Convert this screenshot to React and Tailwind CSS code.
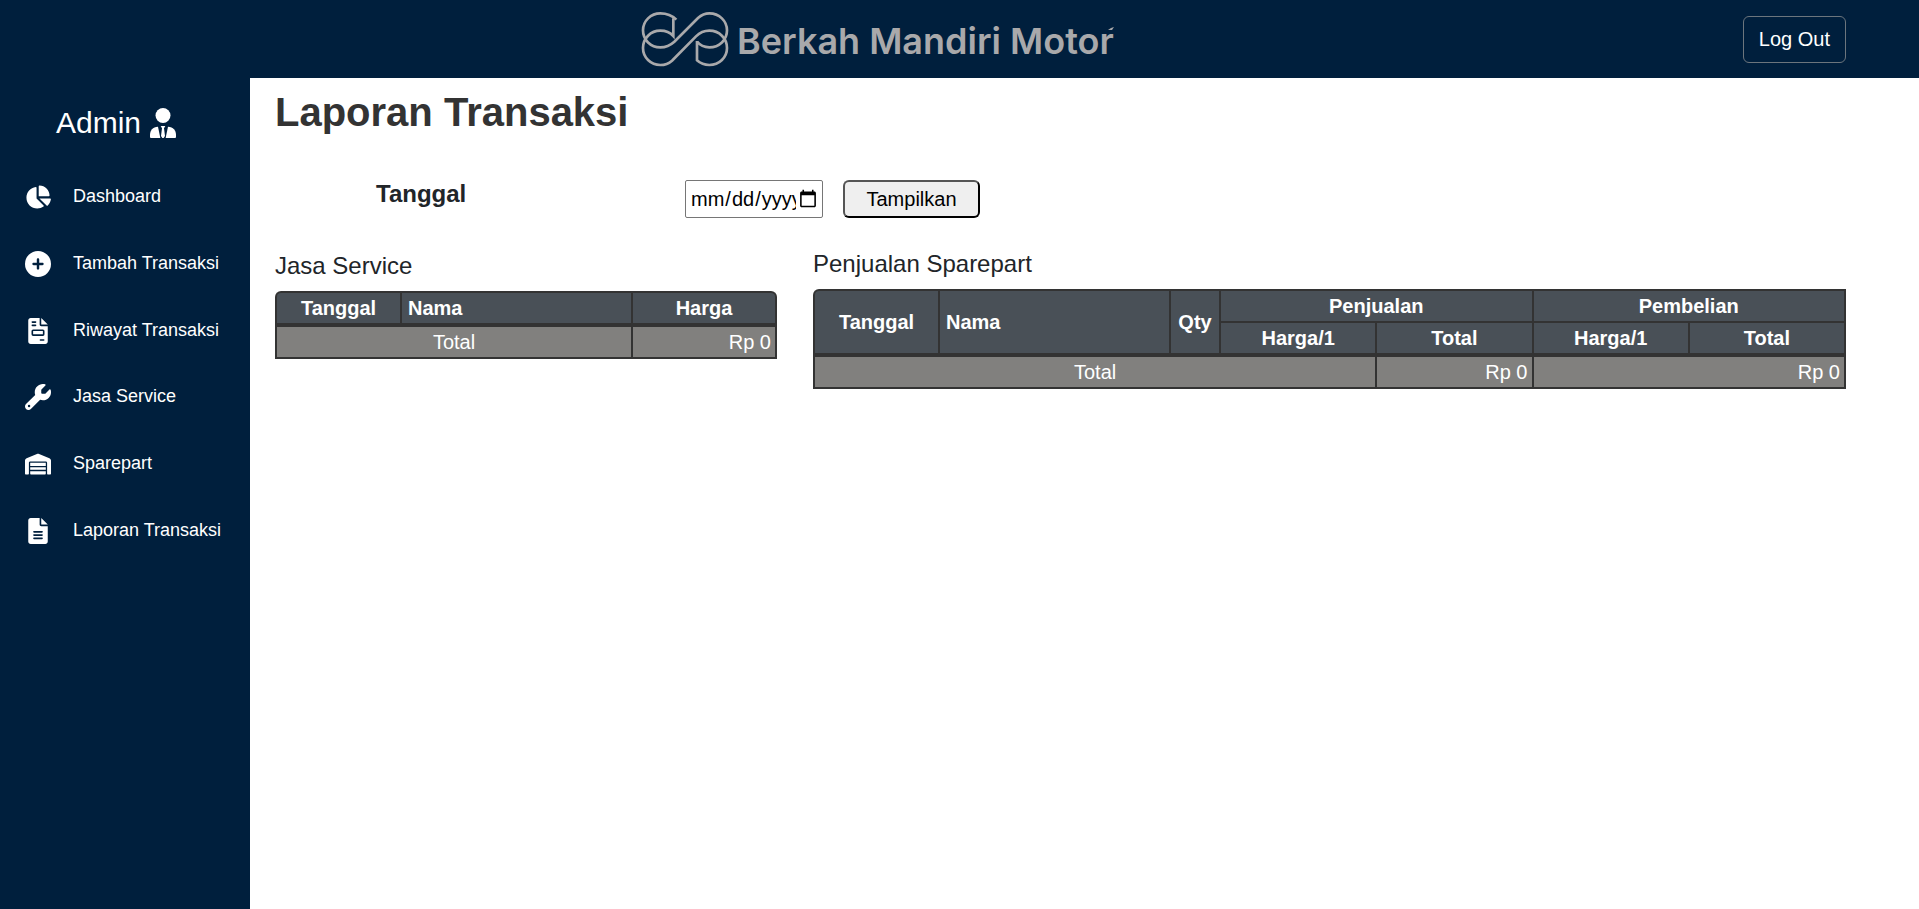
import { FaChartPie, FaCirclePlus, FaWarehouse, FaWrench } from "react-icons/fa6";

const filePage =
  "M256 0v128h128L256 0z M224 128V0H48C21.5 0 0 21.5 0 48v416c0 26.5 21.5 48 48 48h288c26.5 0 48-21.5 48-48V160H256c-17.7 0-32-14.3-32-32z";

function InvoiceIcon({ className }) {
  return (
    <svg viewBox="0 0 384 512" className={className} aria-hidden="true">
      <path d={filePage} fill="currentColor" />
      <g fill="none" stroke="#001f3d" strokeWidth="32" strokeLinecap="round">
        <path d="M80 80h64 M80 144h64 M240 432h64" />
        <rect x="80" y="240" width="224" height="96" rx="16" />
      </g>
    </svg>
  );
}

function ReportIcon({ className }) {
  return (
    <svg viewBox="0 0 384 512" className={className} aria-hidden="true">
      <path d={filePage} fill="currentColor" />
      <path d="M112 272h160 M112 336h160 M112 400h160" fill="none" stroke="#001f3d" strokeWidth="32" strokeLinecap="round" />
    </svg>
  );
}

const menu = [
  { label: "Dashboard", Icon: FaChartPie },
  { label: "Tambah Transaksi", Icon: FaCirclePlus },
  { label: "Riwayat Transaksi", Icon: InvoiceIcon },
  { label: "Jasa Service", Icon: FaWrench },
  { label: "Sparepart", Icon: FaWarehouse },
  { label: "Laporan Transaksi", Icon: ReportIcon },
];

function Logo() {
  return (
    <div className="flex items-center gap-2 text-[#a9a9ab]">
      <svg viewBox="40 34 264 168" className="h-14 w-[88px]" fill="none" stroke="currentColor" strokeWidth="8" aria-hidden="true">
        <path d="M146 60 C134 48 118 41 98 41 C69 41 46 64 46 92 C46 121 69 143 98 143 C115 143 128 137 140 126 L211 55 C221 46 231 41 245 41 C275 41 298 64 298 92 C298 121 275 143 245 143 C231 143 218 138 208 126" />
        <path d="M137 56 V109 C127 98 114 93 98 93 C69 93 46 116 46 145 C46 173 69 196 98 196 C112 196 123 192 133 183 L205 110 C216 99 229 93 245 93 C275 93 298 116 298 145 C298 173 275 196 245 196 C231 196 218 191 208 182 V124" />
      </svg>
      <span className="relative pt-1 font-[Inter,sans-serif] text-4xl leading-10 font-semibold">
        Berkah Mandiri Motor
        <svg viewBox="0 0 6 4" className="absolute top-2.5 right-0 h-1 w-1.5" fill="currentColor" aria-hidden="true">
          <path d="M0 3 L3 1 L6 0 L4 3 Z" />
        </svg>
      </span>
    </div>
  );
}

function AdminIcon() {
  return (
    <svg viewBox="0 0 78 90" className="h-[30px] w-[26px]" fill="currentColor" aria-hidden="true">
      <circle cx="39" cy="22.5" r="22.5" />
      <path d="M0 87 V81 C0 67 8 57 24 56 L31 90 H3 Q0 90 0 87 Z" />
      <path d="M78 87 V81 C78 67 70 57 54 56 L47 90 H75 Q78 90 78 87 Z" />
      <path d="M32 54 H46 L42 61 L45 84 L41 90 H37 L33 84 L36 61 Z" />
    </svg>
  );
}

const tableClass =
  "w-full table-fixed border-separate border-spacing-[2px] bg-[#333333] text-xl leading-[30px] text-white";
const th = "bg-[#495057] p-0 text-center font-bold";
const thLeft = "bg-[#495057] py-0 px-1.5 text-left font-bold";
const tdCenter = "border-t-2 border-[#333333] bg-[#81807e] p-0 text-center";
const tdRight = "border-t-2 border-[#333333] bg-[#81807e] py-0 px-1 text-right";

function ServiceTable() {
  return (
    <table className={`${tableClass} rounded-t-md`} aria-labelledby="jasa-service">
      <colgroup>
        <col className="w-[123px]" />
        <col />
        <col className="w-[142px]" />
      </colgroup>
      <thead>
        <tr>
          <th className={`${th} rounded-tl-sm`}>Tanggal</th>
          <th className={thLeft}>Nama</th>
          <th className={`${th} rounded-tr-sm`}>Harga</th>
        </tr>
      </thead>
      <tbody>
        <tr>
          <td colSpan={2} className={tdCenter}>Total</td>
          <td className={tdRight}>Rp 0</td>
        </tr>
      </tbody>
    </table>
  );
}

function SparepartTable() {
  return (
    <table className={`${tableClass} rounded-tl-md`} aria-labelledby="penjualan-sparepart">
      <colgroup>
        <col className="w-[123px]" />
        <col className="w-[229px]" />
        <col className="w-12" />
        <col />
        <col />
        <col />
        <col />
      </colgroup>
      <thead>
        <tr>
          <th rowSpan={2} className={`${th} rounded-tl-sm`}>Tanggal</th>
          <th rowSpan={2} className={thLeft}>Nama</th>
          <th rowSpan={2} className={th}>Qty</th>
          <th colSpan={2} className={th}>Penjualan</th>
          <th colSpan={2} className={th}>Pembelian</th>
        </tr>
        <tr>
          <th className={th}>Harga/1</th>
          <th className={th}>Total</th>
          <th className={th}>Harga/1</th>
          <th className={th}>Total</th>
        </tr>
      </thead>
      <tbody>
        <tr>
          <td colSpan={4} className={tdCenter}>Total</td>
          <td className={tdRight}>Rp 0</td>
          <td colSpan={2} className={tdRight}>Rp 0</td>
        </tr>
      </tbody>
    </table>
  );
}

export default function App() {
  return (
    <div className="flex min-h-screen flex-col bg-white font-['Liberation_Sans',Arial,sans-serif] text-[#212529]">
      <header className="grid h-[78px] grid-cols-[1fr_auto] items-center bg-[#001f3d] pr-[73px]">
        <div className="flex justify-center pl-3">
          <Logo />
        </div>
        <button type="button" className="h-[47px] rounded-md border border-[#6c757d] px-[15px] text-xl text-white">
          Log Out
        </button>
      </header>

      <div className="flex flex-1">
        <aside className="w-[250px] shrink-0 bg-[#001f3d] text-white">
          <div className="flex h-[86px] items-center gap-[9px] pt-1 pl-14">
            <span className="text-3xl">Admin</span>
            <AdminIcon />
          </div>
          <nav className="grid h-[400px] grid-rows-6">
            {menu.map(({ label, Icon }) => (
              <a key={label} href="#" className="flex items-center gap-[22px] pl-[25px] text-lg">
                <Icon className="size-[26px]" />
                <span className="pb-0.5">{label}</span>
              </a>
            ))}
          </nav>
        </aside>

        <main className="flex-1 pr-[73px] pl-[25px]">
          <h1 className="pt-1 text-[40px] leading-[60px] font-bold text-[#333333]">Laporan Transaksi</h1>

          <form className="mt-[38px] flex items-start">
            <label htmlFor="tanggal" className="w-[410px] pl-[101px] text-2xl leading-7 font-bold">
              Tanggal
            </label>
            <input
              id="tanggal"
              type="date"
              className="h-[38px] w-[138px] rounded-[2px] border border-[#767676] bg-white pr-0.5 pl-1 text-xl text-black"
            />
            <button
              type="button"
              className="ml-5 h-[38px] w-[137px] rounded-md border-2 border-t-[#555555] border-r-black border-b-black border-l-[#555555] bg-[#efefef] text-xl text-black"
            >
              Tampilkan
            </button>
          </form>

          <div className="mt-7 grid grid-cols-[502fr_1033fr] items-start gap-9">
            <section>
              <h2 id="jasa-service" className="pt-0.5 pb-[7px] text-2xl leading-9">Jasa Service</h2>
              <ServiceTable />
            </section>
            <section>
              <h2 id="penjualan-sparepart" className="pb-[7px] text-2xl leading-9">Penjualan Sparepart</h2>
              <SparepartTable />
            </section>
          </div>
        </main>
      </div>
    </div>
  );
}
